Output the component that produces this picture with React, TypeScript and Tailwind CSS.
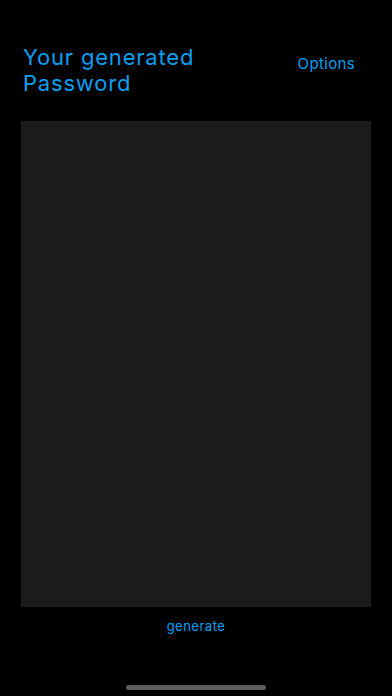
export default function App() {
  return (
    <div className="flex h-[696px] w-[392px] flex-col bg-black font-['Inter',sans-serif] text-[#0a9ff0]">
      <div className="flex items-start justify-between pl-[23px] pr-[37px] pt-[44px]">
        <h1 className="text-[22px] leading-[26px] tracking-[0.8px]">
          Your generated
          <br />
          Password
        </h1>
        <button className="mt-[11px] text-[15px] leading-[18px] tracking-[0.35px]">Options</button>
      </div>
      <div className="mx-[21px] mt-[25px] h-[486px] bg-[#1c1c1c]" />
      <button className="mt-[11px] self-center text-[13px] leading-[16px] tracking-[0.5px]">generate</button>
      <div className="mt-auto mb-[6px] h-[5px] w-[140px] self-center rounded-full bg-[#5c5c5c]" />
    </div>
  );
}
